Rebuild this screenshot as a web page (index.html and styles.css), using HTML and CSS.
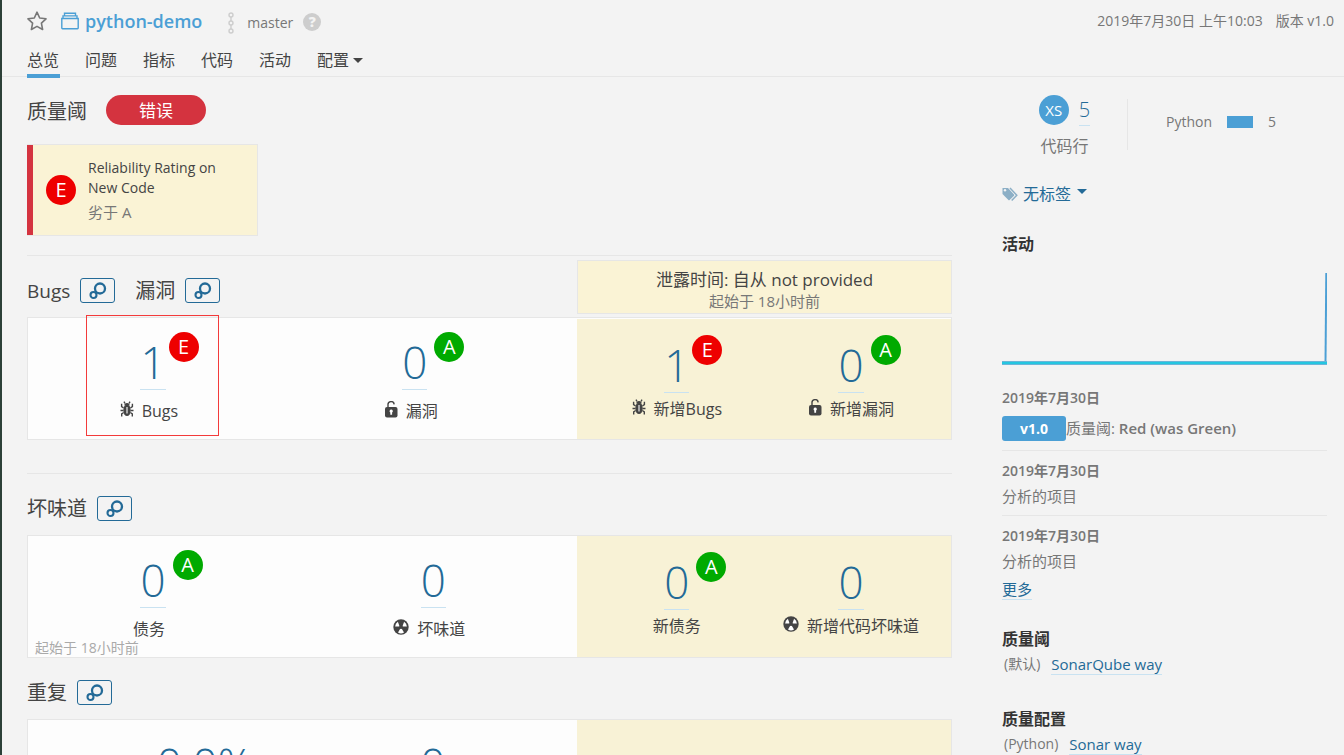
FILE: index.html
```html
<!DOCTYPE html>
<html lang="zh-CN">
<head>
<meta charset="utf-8">
<meta name="viewport" content="width=device-width, initial-scale=1">
<title>python-demo</title>
<link rel="stylesheet" href="styles.css">
</head>
<body>
<svg class="defs" width="0" height="0" aria-hidden="true">
  <symbol id="i-rings" viewBox="0 0 18 18"><circle cx="11" cy="6.500" r="5" fill="none" stroke="currentColor" stroke-width="2.300"/><circle cx="4.500" cy="13" r="3" fill="none" stroke="currentColor" stroke-width="2.100"/></symbol>
  <symbol id="i-bug" viewBox="0 0 14 16"><ellipse cx="7" cy="9.300" rx="3.700" ry="5.800" fill="currentColor"/><path d="M4.300 4.600a2.700 2.600 0 0 1 5.400 0z" fill="currentColor"/><path d="M5 2.500 4 .7M9 2.500l1-1.800M3.600 7 1.600 5.600V2.700M10.400 7l2-1.400V2.700M3.300 9.500H.5M10.700 9.500h2.800M3.700 11.500l-2 1.300v2.600M10.300 11.500l2 1.300v2.600" fill="none" stroke="currentColor" stroke-width="1.400"/><path d="M7 6v6.500" stroke="#fff" stroke-width="1.100"/></symbol>
  <symbol id="i-lock" viewBox="0 0 14 17"><rect x="1" y="6" width="12.500" height="10.500" rx="2" fill="currentColor"/><path d="M4 6.500V4a3 3 0 0 1 6.200-.6" fill="none" stroke="currentColor" stroke-width="1.400"/><path d="M7.200 8.500a1.700 1.700 0 0 1 .9 3.100v2.200H6.300v-2.200a1.700 1.700 0 0 1 .9-3.100z" fill="#fff"/></symbol>
  <symbol id="i-smell" viewBox="0 0 16 16"><circle cx="8" cy="8" r="7.700" fill="currentColor"/><path d="M6.600 7.400H2.100A6 6 0 0 1 4.900 2.800zM9.400 7.400h4.500a6 6 0 0 0-2.800-4.600zM7.200 9.800 5 13.600a6 6 0 0 0 6 0L8.800 9.800z" fill="#fff"/><circle cx="8" cy="8" r="1.700" fill="currentColor"/></symbol>
</svg>
<div class="page">
  <header class="top">
    <div class="title-row">
      <button class="icon-button" aria-label="收藏"><svg width="20" height="20" viewBox="0 0 20 20"><path d="M10 1.200 12.700 7l6.300.8-4.600 4.400 1.200 6.300L10 15.400l-5.600 3.100 1.200-6.300L1 7.800 7.300 7z" fill="none" stroke="#777" stroke-width="1.600" stroke-linejoin="round"/></svg></button>
      <a class="project" href="#"><svg width="18" height="18" viewBox="0 0 18 18"><path d="M.8 6.500h16.400V16a.7.700 0 0 1-.7.700h-15A.7.700 0 0 1 .8 16zM2 6.500V3.900h14v2.600M3.500 3.900V1.200h11v2.700" fill="none" stroke="#4b9fd5" stroke-width="1.400"/></svg><strong>python-demo</strong></a>
      <span class="branch"><svg width="8" height="22" viewBox="0 0 8 22"><g fill="none" stroke="#cdcdcd" stroke-width="1.400"><circle cx="4" cy="3" r="2"/><circle cx="4" cy="11" r="2"/><circle cx="4" cy="19" r="2"/><path d="M4 5v4M4 13v4"/></g></svg>master</span>
      <button class="help" aria-label="帮助">?</button>
      <div class="meta"><time>2019年7月30日 上午10:03</time><span>版本 v1.0</span></div>
    </div>
    <nav class="tabs">
      <a class="active" href="#">总览</a><a href="#">问题</a><a href="#">指标</a><a href="#">代码</a><a href="#">活动</a><a href="#">配置<i class="caret"></i></a>
    </nav>
  </header>
  <div class="layout">
    <main class="main">
      <div class="gate"><h2>质量阈</h2><span class="pill">错误</span></div>
      <a class="condition" href="#"><b class="rating e">E</b><span>Reliability Rating on New Code<small>劣于 A</small></span></a>

      <section class="domain bugs">
        <div class="heads">
          <h2 class="latin">Bugs</h2><button class="rings" aria-label="Bugs"><svg width="18" height="18"><use href="#i-rings"/></svg></button>
          <h2 class="second">漏洞</h2><button class="rings" aria-label="漏洞"><svg width="18" height="18"><use href="#i-rings"/></svg></button>
          <div class="leak-head">泄露时间: 自从 not provided<small>起始于 18小时前</small></div>
        </div>
        <div class="panel">
          <div class="overall">
            <div class="measure"><div class="value"><a href="#">1</a><b class="rating e">E</b></div><div class="label"><svg width="14" height="16"><use href="#i-bug"/></svg>Bugs</div><div class="marker"></div></div>
            <div class="measure"><div class="value"><a href="#">0</a><b class="rating a">A</b></div><div class="label"><svg width="14" height="17"><use href="#i-lock"/></svg>漏洞</div></div>
          </div>
          <div class="leak">
            <div class="measure"><div class="value"><a href="#">1</a><b class="rating e">E</b></div><div class="label"><svg width="14" height="16"><use href="#i-bug"/></svg>新增Bugs</div></div>
            <div class="measure"><div class="value"><a href="#">0</a><b class="rating a">A</b></div><div class="label"><svg width="14" height="17"><use href="#i-lock"/></svg>新增漏洞</div></div>
          </div>
        </div>
      </section>

      <section class="domain smells">
        <div class="heads"><h2>坏味道</h2><button class="rings" aria-label="坏味道"><svg width="18" height="18"><use href="#i-rings"/></svg></button></div>
        <div class="panel">
          <div class="overall">
            <div class="measure"><div class="value"><a href="#">0</a><b class="rating a">A</b></div><div class="label">债务</div></div>
            <div class="measure"><div class="value"><a href="#">0</a></div><div class="label"><svg width="16" height="16"><use href="#i-smell"/></svg>坏味道</div></div>
            <span class="since">起始于 18小时前</span>
          </div>
          <div class="leak">
            <div class="measure"><div class="value"><a href="#">0</a><b class="rating a">A</b></div><div class="label">新债务</div></div>
            <div class="measure"><div class="value"><a href="#">0</a></div><div class="label"><svg width="16" height="16"><use href="#i-smell"/></svg>新增代码坏味道</div></div>
          </div>
        </div>
      </section>

      <section class="domain dup">
        <div class="heads"><h2>重复</h2><button class="rings" aria-label="重复"><svg width="18" height="18"><use href="#i-rings"/></svg></button></div>
        <div class="panel">
          <div class="overall">
            <div class="measure"><div class="value"><a href="#">0.0%</a></div></div>
            <div class="measure"><div class="value"><a href="#">0</a></div></div>
          </div>
          <div class="leak"></div>
        </div>
      </section>
    </main>

    <aside class="side">
      <div class="size">
        <div class="lines"><div class="count"><b class="rating xs">XS</b><a href="#">5</a></div><span>代码行</span></div>
        <div class="lang"><span>Python</span><i class="bar"></i><span>5</span></div>
      </div>
      <button class="tags"><svg width="17" height="15" viewBox="0 0 17 15"><path d="M1 1h5l6 6.500a1 1 0 0 1 0 1.200L7.600 13a1 1 0 0 1-1.200 0L.5 7V1.500z" fill="#8cafc6"/><circle cx="3" cy="3.300" r="1.200" fill="#f3f3f3"/><path d="m8 1 6.800 7.200L9.700 13.500" fill="none" stroke="#8cafc6" stroke-width="1.500"/></svg>无标签<i class="caret"></i></button>
      <h3>活动</h3>
      <svg class="graph" height="94" viewBox="0 0 325 94" preserveAspectRatio="none" role="img" aria-label="活动"><path d="M323.500 92 324.300 2" fill="none" stroke="#4b9fd5" stroke-width="2"/><path d="M0 92h325" stroke="#6bb5d8" stroke-width="4"/><path d="M0 92h325" stroke="#24c6e0" stroke-width="2"/></svg>
      <ul class="events">
        <li><strong>2019年7月30日</strong><div class="event"><span class="version">v1.0</span><span>质量阈: <b>Red (was Green)</b></span></div></li>
        <li><strong>2019年7月30日</strong><div>分析的项目</div></li>
        <li><strong>2019年7月30日</strong><div>分析的项目</div></li>
      </ul>
      <a class="link more" href="#">更多</a>
      <h3 class="gate-title">质量阈</h3>
      <p class="row"><span>(默认)</span><a class="link" href="#">SonarQube way</a></p>
      <h3 class="profile-title">质量配置</h3>
      <p class="row"><span>(Python)</span><a class="link" href="#">Sonar way</a></p>
    </aside>
  </div>
</div>
</body>
</html>
```
FILE: styles.css
```css
* { box-sizing: border-box; }
html { height: 100%; overflow: hidden; }
body { margin: 0; height: 100%; overflow: hidden; background: #f3f3f3; color: #444; font: 14px/20px "Open Sans", "Noto Sans CJK SC", sans-serif; }
h2, h3, p, ul { margin: 0; padding: 0; font-weight: 400; }
a { color: inherit; text-decoration: none; }
button { margin: 0; padding: 0; border: 0; background: none; font: inherit; color: inherit; }
small { display: block; color: #777; font-size: 15px; }
svg { display: block; flex: none; }
.defs { position: absolute; }
.page { min-height: 100%; border-left: 2px solid #2c4038; }
.top { height: 77px; border-bottom: 1px solid #e6e6e6; padding: 0 10px 0 25px; }
.title-row { display: flex; align-items: center; height: 42px; }
.project { display: flex; align-items: center; gap: 6px; margin-left: 14px; color: #4b9fd5; font-size: 18px; }
.project strong { font-weight: 600; }
.branch { display: flex; align-items: center; gap: 12px; margin-left: 25px; padding-top: 3px; color: #777; }
.help { width: 18px; height: 18px; margin: 2px 0 0 10px; border-radius: 50%; background: #cdcdcd; color: #f3f3f3; font-size: 14px; font-weight: 800; line-height: 18px; }
.meta { display: flex; gap: 13px; margin-left: auto; color: #777; }
.tabs { display: flex; gap: 25px; font-size: 16px; line-height: 24px; }
.tabs a { display: flex; align-items: center; min-width: 33px; height: 36px; padding-top: 4px; border-bottom: 4px solid transparent; }
.tabs .active { border-color: #4b9fd5; }
.caret { display: inline-block; margin-left: 4px; border: 5px solid transparent; border-top-color: currentColor; border-bottom: 0; }
.layout { display: grid; grid-template-columns: minmax(0, 1fr) 325px; column-gap: 50px; padding: 18px 17px 0 25px; }
h2 { font-size: 20px; line-height: 30px; }
.latin { font-size: 19px; }
.gate { display: flex; align-items: center; gap: 19px; height: 30px; }
.gate h2 { padding-top: 3px; }
.pill { width: 100px; height: 30px; padding-top: 2px; border-radius: 15px; background: #d4333f; color: #fff; font-size: 17px; line-height: 28px; text-align: center; }
.condition { display: flex; align-items: center; gap: 12px; width: 231px; height: 92px; margin-top: 19px; padding: 0 25px 0 19px; border: 1px solid #e6e6e6; border-left: 0; background: #faf3d5; box-shadow: inset 6px 0 #d4333f; }
.condition small { margin-top: 4px; }
.rating { flex: none; width: 30px; height: 30px; border-radius: 50%; color: #fff; font-size: 20px; font-weight: 400; line-height: 30px; text-align: center; }
.e { background: #e00; }
.a { background: #0a0; }
.xs { background: #4b9fd5; font-size: 15px; }
.domain { border-top: 1px solid #e6e6e6; }
.bugs { margin-top: 19px; }
.smells { margin-top: 33px; }
.heads { display: flex; align-items: center; gap: 10px; height: 61px; padding-top: 8px; }
.second { margin-left: 10px; }
.rings { display: flex; align-items: center; justify-content: center; width: 35px; height: 25px; border: 1px solid #236a97; border-radius: 3px; color: #236a97; }
.leak-head { align-self: flex-start; width: 375px; height: 54px; margin: -4px 0 0 auto; padding-top: 8px; border: 1px solid #e6e6e6; background: #faf3d5; font-size: 17px; line-height: 22px; text-align: center; }
.leak-head small { line-height: 20px; }
.panel { display: grid; grid-template-columns: minmax(0, 22fr) minmax(0, 15fr); height: 123px; border: 1px solid #e6e6e6; background: #fdfdfd; }
.overall, .leak { position: relative; display: grid; }
.bugs .overall { grid-template-columns: 250fr 274fr 25fr; }
.smells .overall { grid-template-columns: 250fr 299fr; }
.dup .overall { grid-template-columns: 354fr 102fr 93fr; }
.leak { grid-template-columns: 1fr 1fr; padding: 2px 13px 0; background: #f8f2d6; }
.bugs .leak { margin-top: 1px; }
.measure { position: relative; display: flex; flex-direction: column; align-items: center; padding-top: 14px; }
.smells .overall .measure:nth-child(2) { padding-left: 12px; }
.value { position: relative; height: 58px; }
.value a { display: block; height: 58px; border-bottom: 1px solid #c9e2f1; color: #236a97; font-size: 44px; font-weight: 300; line-height: 61px; }
.value .rating { position: absolute; top: 0; left: 100%; margin-left: 7px; }
.value .e { margin-left: 3px; }
.label { display: flex; align-items: center; gap: 8px; margin-top: 9px; font-size: 16px; line-height: 24px; }
.label svg { margin-bottom: 4px; }
.overall .label { padding-right: 8px; }
.leak .label { margin-top: 4px; }
.marker { position: absolute; left: 58px; top: -3px; width: 133px; height: 121px; border: 1px solid #f33b3b; }
.since { position: absolute; left: 7px; bottom: 0; color: #aaa; font-size: 14px; line-height: 18px; }
.dup { border: 0; }
.size { display: flex; color: #777; }
.lines { width: 125px; text-align: center; font-size: 16px; }
.lines span { display: block; margin-top: 10px; }
.count { display: flex; justify-content: center; gap: 10px; }
.count a { color: #236a97; border-bottom: 1px solid #c9e2f1; font-size: 20px; line-height: 30px; font-weight: 300; }
.lang { display: flex; align-items: center; gap: 15px; height: 51px; margin-top: 4px; padding: 0 0 6px 38px; border-left: 1px solid #e6e6e6; }
.bar { width: 26px; height: 12px; background: #4b9fd5; }
.tags { display: flex; align-items: center; gap: 4px; margin-top: 26px; color: #236a97; font-size: 16px; line-height: 24px; }
.tags .caret { margin: 0 0 5px 2px; }
h3 { color: #333; font-size: 16px; font-weight: 600; line-height: 24px; }
.tags + h3 { margin-top: 26px; }
.graph { width: 100%; margin-top: 15px; }
.events { margin-top: 23px; list-style: none; color: #777; font-size: 15px; }
.events li { margin-bottom: 10px; padding-bottom: 9px; border-bottom: 1px solid #e6e6e6; }
.events li:last-child { margin: 0; padding-bottom: 8px; border: 0; }
.events strong { display: block; font-size: 14px; font-weight: 600; }
.events b { font-weight: 600; }
.events div { margin-top: 5px; }
.events .event { display: flex; margin-top: 8px; line-height: 24px; }
.version { width: 64px; border-radius: 3px; background: #4b9fd5; color: #fff; font-size: 14px; font-weight: 700; line-height: 25px; text-align: center; }
.link { color: #236a97; border-bottom: 1px solid #c9e2f1; font-size: 15px; }
.gate-title { margin-top: 27px; }
.profile-title { margin-top: 32px; }
.row { display: flex; gap: 11px; margin-top: 3px; padding-left: 2px; color: #777; }
```
